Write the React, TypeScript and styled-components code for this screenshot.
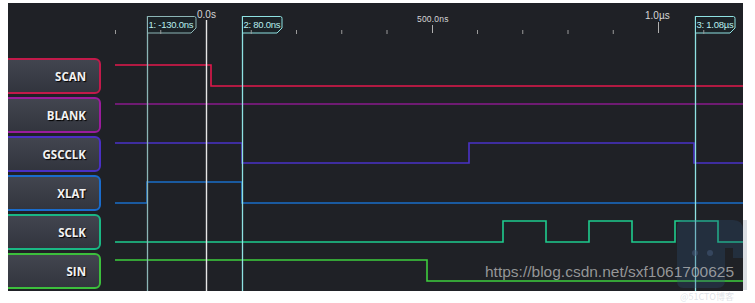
import React from "react";
import styled, { createGlobalStyle } from "styled-components";

const GlobalStyle = createGlobalStyle`
  html, body {
    margin: 0;
    padding: 0;
    background: #ffffff;
  }
`;

const Page = styled.div`
  position: relative;
  width: 755px;
  height: 303px;
  padding: 3px 0 0 8px;
  box-sizing: border-box;
  overflow: hidden;
`;

const Scope = styled.div`
  width: 735px;
  height: 288px;
  background: #1f2126;
  display: flex;
  overflow: hidden;
`;

const Channels = styled.div`
  width: 93px;
  flex: none;
  display: flex;
  flex-direction: column;
  gap: 3px;
  padding-top: 55px;
  box-sizing: border-box;
`;

const ChannelTag = styled.div<{ $edge: string }>`
  height: 36px;
  margin-left: -8px;
  box-sizing: border-box;
  border: 2px solid ${(p) => p.$edge};
  border-radius: 6px;
  background: linear-gradient(#42454f, #32353e);
  display: flex;
  align-items: center;
  justify-content: flex-end;
  padding-right: 13px;
  font-family: "Open Sans", "DejaVu Sans", sans-serif;
  font-weight: 700;
  font-size: 11.5px;
  color: #f2f2f2;
  text-shadow: 1px 1px 1px #000000;
`;

const Plot = styled.svg`
  display: block;
  flex: none;
  width: 642px;
  height: 288px;
`;

const Watermark = styled.div`
  position: absolute;
  left: 485px;
  top: 264px;
  font-family: "Liberation Sans", Arial, sans-serif;
  font-size: 15.5px;
  line-height: 1;
  color: rgba(190, 190, 190, 0.75);
  white-space: nowrap;
`;

const Badge = styled.svg`
  position: absolute;
  left: 675px;
  top: 218px;
  width: 80px;
  height: 85px;
`;

const channels = [
  { name: "SCAN", edge: "#c21a4a", wave: "#e2184c", d: "M115 65H211V86H743" },
  { name: "BLANK", edge: "#9a1c9c", wave: "#8a1a8c", d: "M115 104H743" },
  { name: "GSCCLK", edge: "#4a30c4", wave: "#4a32c8", d: "M115 143H242V163H469V143H694V163H743" },
  { name: "XLAT", edge: "#1a6ccc", wave: "#1a6ec8", d: "M115 203H147V182H242V203H743" },
  {
    name: "SCLK",
    edge: "#1ab884",
    wave: "#1ecc8e",
    d: "M115 242H503V221H546V242H589V221H632V242H675V221H718V242H743",
  },
  { name: "SIN", edge: "#3cbf3c", wave: "#3ece3e", d: "M115 260H427V281H743" },
];

const cursors = [
  { x: 147, w: 49, label: "1: -130.0ns", stroke: "#8cb6b6" },
  { x: 242, w: 40, label: "2: 80.0ns", stroke: "#8ee2e2" },
  { x: 695, w: 40, label: "3: 1.08µs", stroke: "#8ee2e2" },
];

const ticks = Array.from({ length: 14 }, (_, i) => 206 + (i - 2) * 45.25).filter(
  (x) => x < 740 && Math.abs(x - 206) > 1 && Math.abs(x - 432.25) > 1 && Math.abs(x - 658.5) > 1
);

const App = () => {
  return (
    <>
      <GlobalStyle />
      <Page>
        <Scope>
          <Channels>
            {channels.map((c) => (
              <ChannelTag key={c.name} $edge={c.edge}>
                {c.name}
              </ChannelTag>
            ))}
          </Channels>
          <Plot viewBox="101 3 642 288">
            {channels.map((c) => (
              <path key={c.name} d={c.d} fill="none" stroke={c.wave} strokeWidth={1.6} />
            ))}

            {/* trigger line */}
            <line x1={206.5} y1={20} x2={206.5} y2={291} stroke="#e6e6e6" strokeWidth={1.4} />

            {cursors.map((c) => (
              <g key={c.label}>
                <line x1={c.x + 0.5} y1={16} x2={c.x + 0.5} y2={291} stroke={c.stroke} strokeWidth={1.3} />
                <path
                  d={`M${c.x + 0.5} 33V16.5H${c.x + c.w - 1.5}Q${c.x + c.w} 16.5 ${c.x + c.w} 18.5V28L${c.x + c.w - 5} 33Z`}
                  fill="#1b2327"
                  stroke={c.stroke}
                  strokeWidth={1}
                />
                <text
                  x={c.x + 1.5}
                  y={27.5}
                  fontFamily="'Liberation Sans', Arial, sans-serif"
                  fontSize={9.5}
                  fill="#b8eeee"
                  letterSpacing={-0.25}
                >
                  {c.label}
                </text>
              </g>
            ))}

            {ticks.map((x) => (
              <line key={x} x1={x} y1={30} x2={x} y2={34} stroke="#9a9a9a" strokeWidth={1} />
            ))}
            <line x1={432.5} y1={25} x2={432.5} y2={33} stroke="#b0b0b0" strokeWidth={1} />
            <line x1={658.5} y1={22} x2={658.5} y2={33} stroke="#b0b0b0" strokeWidth={1} />

            <g fontFamily="'Liberation Sans', Arial, sans-serif" fill="#d6d6d6">
              <text x={197} y={17.5} fontSize={10}>
                0.0s
              </text>
              <text x={417} y={21.5} fontSize={8.5} letterSpacing={0.2}>
                500.0ns
              </text>
              <text x={645} y={19} fontSize={10}>
                1.0µs
              </text>
            </g>
          </Plot>
        </Scope>

        <Badge viewBox="0 0 80 85">
          <path
            d="M8 2H58Q68 2 68 12V40H58V30H50V62Q50 70 42 70H8Q2 70 2 62V10Q2 2 8 2Z"
            fill="rgba(48, 80, 120, 0.3)"
          />
          <rect x={68} y={2} width={4} height={70} fill="rgba(150, 160, 175, 0.35)" />
          <circle cx={20} cy={35} r={3} fill="rgba(70, 90, 120, 0.55)" />
          <circle cx={35} cy={35} r={3} fill="rgba(70, 90, 120, 0.55)" />
          <text x={5} y={82} fontSize={9} fill="rgba(170, 180, 195, 0.4)" fontFamily="'Noto Sans CJK SC', sans-serif">
            @51CTO博客
          </text>
        </Badge>

        <Watermark>https://blog.csdn.net/sxf1061700625</Watermark>
      </Page>
    </>
  );
};

export default App;
